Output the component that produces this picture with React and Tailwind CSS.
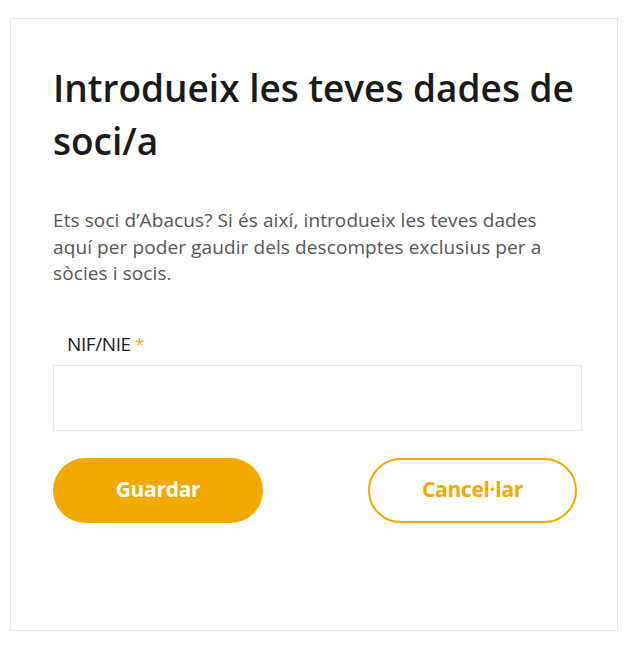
import React, { useState } from 'react';

const App = () => {
  const [nif, setNif] = useState('');

  return (
    <div className="min-h-screen w-full bg-white pt-[18px] pl-[10px] font-['Open_Sans',sans-serif]">
      <div className="w-[608px] h-[613px] border border-[#e6e6e6] bg-white pl-[42px] pr-[35px] pt-[42px]">
        <h1 className="text-[37px] leading-[53px] font-semibold text-[#1a1a1a] tracking-[0px]">
          Introdueix les teves dades de soci/a
        </h1>
        <p className="mt-[40px] text-[19px] leading-[26.5px] text-[#555555] tracking-[0.1px] pr-[30px]">
          Ets soci d’Abacus? Si és així, introdueix les teves dades aquí per poder gaudir dels descomptes exclusius per a sòcies i socis.
        </p>

        <div className="mt-[45px]">
          <label className="block pl-[14px] text-[19px] leading-[24px] text-[#1a1a1a] tracking-[-0.4px]">
            NIF/NIE <span className="text-[#f0a500] text-[16px] align-top">*</span>
          </label>
          <input
            value={nif}
            onChange={(e) => setNif(e.target.value)}
            className="mt-[9px] block w-full h-[66px] border border-[#e6e6e6] px-4 text-[18px] outline-none"
          />
        </div>

        <div className="mt-[27px] flex justify-between w-[524px]">
          <button className="w-[210px] h-[65px] rounded-full bg-[#f1a900] text-white text-[21px] font-bold tracking-[-0.3px]">
            Guardar
          </button>
          <button className="w-[209px] h-[65px] rounded-full border-2 border-[#f1a900] bg-white text-[#f1a900] text-[21px] font-bold tracking-[-0.3px]">
            Cancel·lar
          </button>
        </div>
      </div>
    </div>
  );
};

export default App;
